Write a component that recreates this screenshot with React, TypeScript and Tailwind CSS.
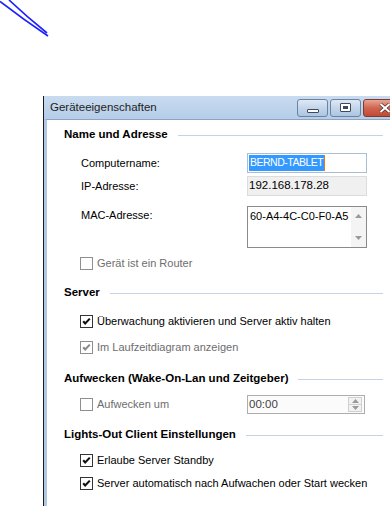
const FONT = "font-['Liberation_Sans',Arial,sans-serif]";

function Check({ checked, disabled }: { checked?: boolean; disabled?: boolean }) {
  return (
    <span
      className={`flex size-[13px] shrink-0 items-center justify-center border bg-white ${
        disabled ? "border-[#8e8f8f]" : "border-[#333]"
      }`}
    >
      {checked && (
        <svg viewBox="0 0 11 11" className="size-[11px]">
          <path
            d="M2.2 5.2l2 2.3L8.8 2.6"
            fill="none"
            stroke={disabled ? "#8a8a8a" : "#111"}
            strokeWidth="2.1"
          />
        </svg>
      )}
    </span>
  );
}

function CheckRow({
  label,
  checked,
  disabled,
  h,
}: {
  label: string;
  checked?: boolean;
  disabled?: boolean;
  h: string;
}) {
  return (
    <div className={`flex items-center gap-[4px] pl-[33px] ${h}`}>
      <Check checked={checked} disabled={disabled} />
      <span className={`text-[11px] ${disabled ? "text-[#6d6d6d]" : "text-black"}`}>
        {label}
      </span>
    </div>
  );
}

function Header({ title, mt }: { title: string; mt: string }) {
  return (
    <div className={`flex h-[20px] items-center pl-[17px] pr-[29px] ${mt}`}>
      <span className="text-[11.5px] font-bold text-black">{title}</span>
      <span className="ml-[10px] h-px flex-1 bg-[#c4d3e2]" />
    </div>
  );
}

function Arrow({ up }: { up?: boolean }) {
  return (
    <svg viewBox="0 0 7 4" className="h-[4px] w-[7px]">
      <path d={up ? "M0 4L3.5 0L7 4z" : "M0 0L3.5 4L7 0z"} fill="#9a9a9a" />
    </svg>
  );
}

function TitleButton({ kind }: { kind: "min" | "max" | "close" }) {
  if (kind === "close") {
    return (
      <div className="flex h-[18px] w-[43px] items-center justify-center rounded-[3px] border border-[#7a3b35] bg-gradient-to-b from-[#e8a493] via-[#d0644f] to-[#c14a33]">
        <svg viewBox="0 0 12 10" className="h-[10px] w-[12px]">
          <path d="M1.5 1l9 8M10.5 1l-9 8" stroke="#4a2a26" strokeWidth="3.4" />
          <path d="M1.5 1l9 8M10.5 1l-9 8" stroke="#fff" strokeWidth="2" />
        </svg>
      </div>
    );
  }
  return (
    <div className="flex h-[18px] w-[31px] items-center justify-center rounded-[3px] border border-[#6d82a1] bg-gradient-to-b from-[#dfe9f5] via-[#c3d5ea] to-[#adc5e2]">
      {kind === "min" ? (
        <span className="mt-[6px] h-[4px] w-[12px] rounded-[1px] border border-[#3b4a5e] bg-white" />
      ) : (
        <span className="flex h-[9px] w-[11px] items-center justify-center rounded-[1px] border border-[#3b4a5e] bg-white">
          <span className="h-[3px] w-[5px] border border-[#3b4a5e] bg-[#3b4a5e]" />
        </span>
      )}
    </div>
  );
}

export default function App() {
  return (
    <div className={`relative h-[506px] w-[390px] overflow-hidden bg-white ${FONT}`}>
      <svg
        viewBox="0 0 60 45"
        className="absolute top-0 left-0 h-[45px] w-[60px]"
        aria-hidden="true"
      >
        <path d="M0 1.5Q24 20 48 36" fill="none" stroke="#1e22ff" strokeWidth="1.7" />
        <path d="M9 0Q27 17 47 33" fill="none" stroke="#1e22ff" strokeWidth="1.7" />
      </svg>

      <div className="mt-[96px] ml-[43px] w-[369px] border-l border-[#1b1b1b]">
        <div className="flex h-[23px] items-center bg-gradient-to-b from-[#c9dbef] to-[#b6cde8] pr-[6px] pl-[6px]">
          <span className="text-[11.5px] text-[#1e1e1e]">Geräteeigenschaften</span>
          <div className="ml-auto flex gap-[2px]">
            <TitleButton kind="min" />
            <TitleButton kind="max" />
            <TitleButton kind="close" />
          </div>
        </div>

        <div className="h-[387px] border-t border-[#8da4c0] border-l-[3px] border-l-[#b0c8e4] bg-white">
          <Header title="Name und Adresse" mt="mt-[5px]" />

          <div className="mt-[8px] flex h-[20px] items-center pl-[34px]">
            <span className="w-[166px] text-[11px] text-black">Computername:</span>
            <div className="flex h-[20px] w-[120px] items-center border border-[#a9bdd3] bg-white pl-[1px]">
              <span className="flex h-[16px] items-center bg-[#3399ff] px-[1px] text-[10.5px] tracking-[-0.5px] text-white">
                BERND-TABLET
              </span>
              <span className="h-[16px] w-px bg-[#e07a20]" />
            </div>
          </div>

          <div className="mt-[3px] flex h-[20px] items-center pl-[34px]">
            <span className="w-[166px] text-[11px] text-black">IP-Adresse:</span>
            <div className="flex h-[20px] w-[120px] items-center border border-[#dcdcdc] bg-[#f0f0f0] pl-[1px] text-[11.5px] text-black">
              192.168.178.28
            </div>
          </div>

          <div className="mt-[10px] flex h-[42px] pl-[34px]">
            <span className="w-[166px] pt-[1px] text-[11px] text-black">MAC-Adresse:</span>
            <div className="flex h-[42px] w-[120px] border border-[#8a8a8a] bg-white">
              <span className="flex-1 pt-[1px] pl-[2px] text-[11px] text-black">
                60-A4-4C-C0-F0-A5
              </span>
              <div className="flex w-[15px] flex-col items-center justify-between bg-[#f4f4f4] py-[7px]">
                <Arrow up />
                <Arrow />
              </div>
            </div>
          </div>

          <CheckRow label="Gerät ist ein Router" disabled h="mt-[6px] h-[18px]" />

          <Header title="Server" mt="mt-[11px]" />
          <CheckRow label="Überwachung aktivieren und Server aktiv halten" checked h="mt-[9px] h-[18px]" />
          <CheckRow label="Im Laufzeitdiagram anzeigen" checked disabled h="mt-[8px] h-[18px]" />

          <Header title="Aufwecken (Wake-On-Lan und Zeitgeber)" mt="mt-[13px]" />
          <div className="mt-[6px] flex h-[19px] items-center pl-[33px]">
            <div className="flex w-[167px] items-center gap-[4px]">
              <Check disabled />
              <span className="text-[11px] text-[#6d6d6d]">Aufwecken um</span>
            </div>
            <div className="flex h-[19px] w-[118px] items-center border border-[#adadad] bg-[#fbfbfb] pr-[2px] pl-[1px]">
              <span className="flex-1 text-[11.5px] text-[#444]">00:00</span>
              <div className="flex h-[15px] w-[14px] flex-col border border-[#d0d0d0]">
                <div className="flex flex-1 items-center justify-center border-b border-[#d0d0d0] bg-[#f2f2f2]">
                  <Arrow up />
                </div>
                <div className="flex flex-1 items-center justify-center bg-[#f2f2f2]">
                  <Arrow />
                </div>
              </div>
            </div>
          </div>

          <Header title="Lights-Out Client Einstellungen" mt="mt-[11px]" />
          <CheckRow label="Erlaube Server Standby" checked h="mt-[6px] h-[18px]" />
          <CheckRow label="Server automatisch nach Aufwachen oder Start wecken" checked h="mt-[5px] h-[18px]" />
        </div>
      </div>
    </div>
  );
}
